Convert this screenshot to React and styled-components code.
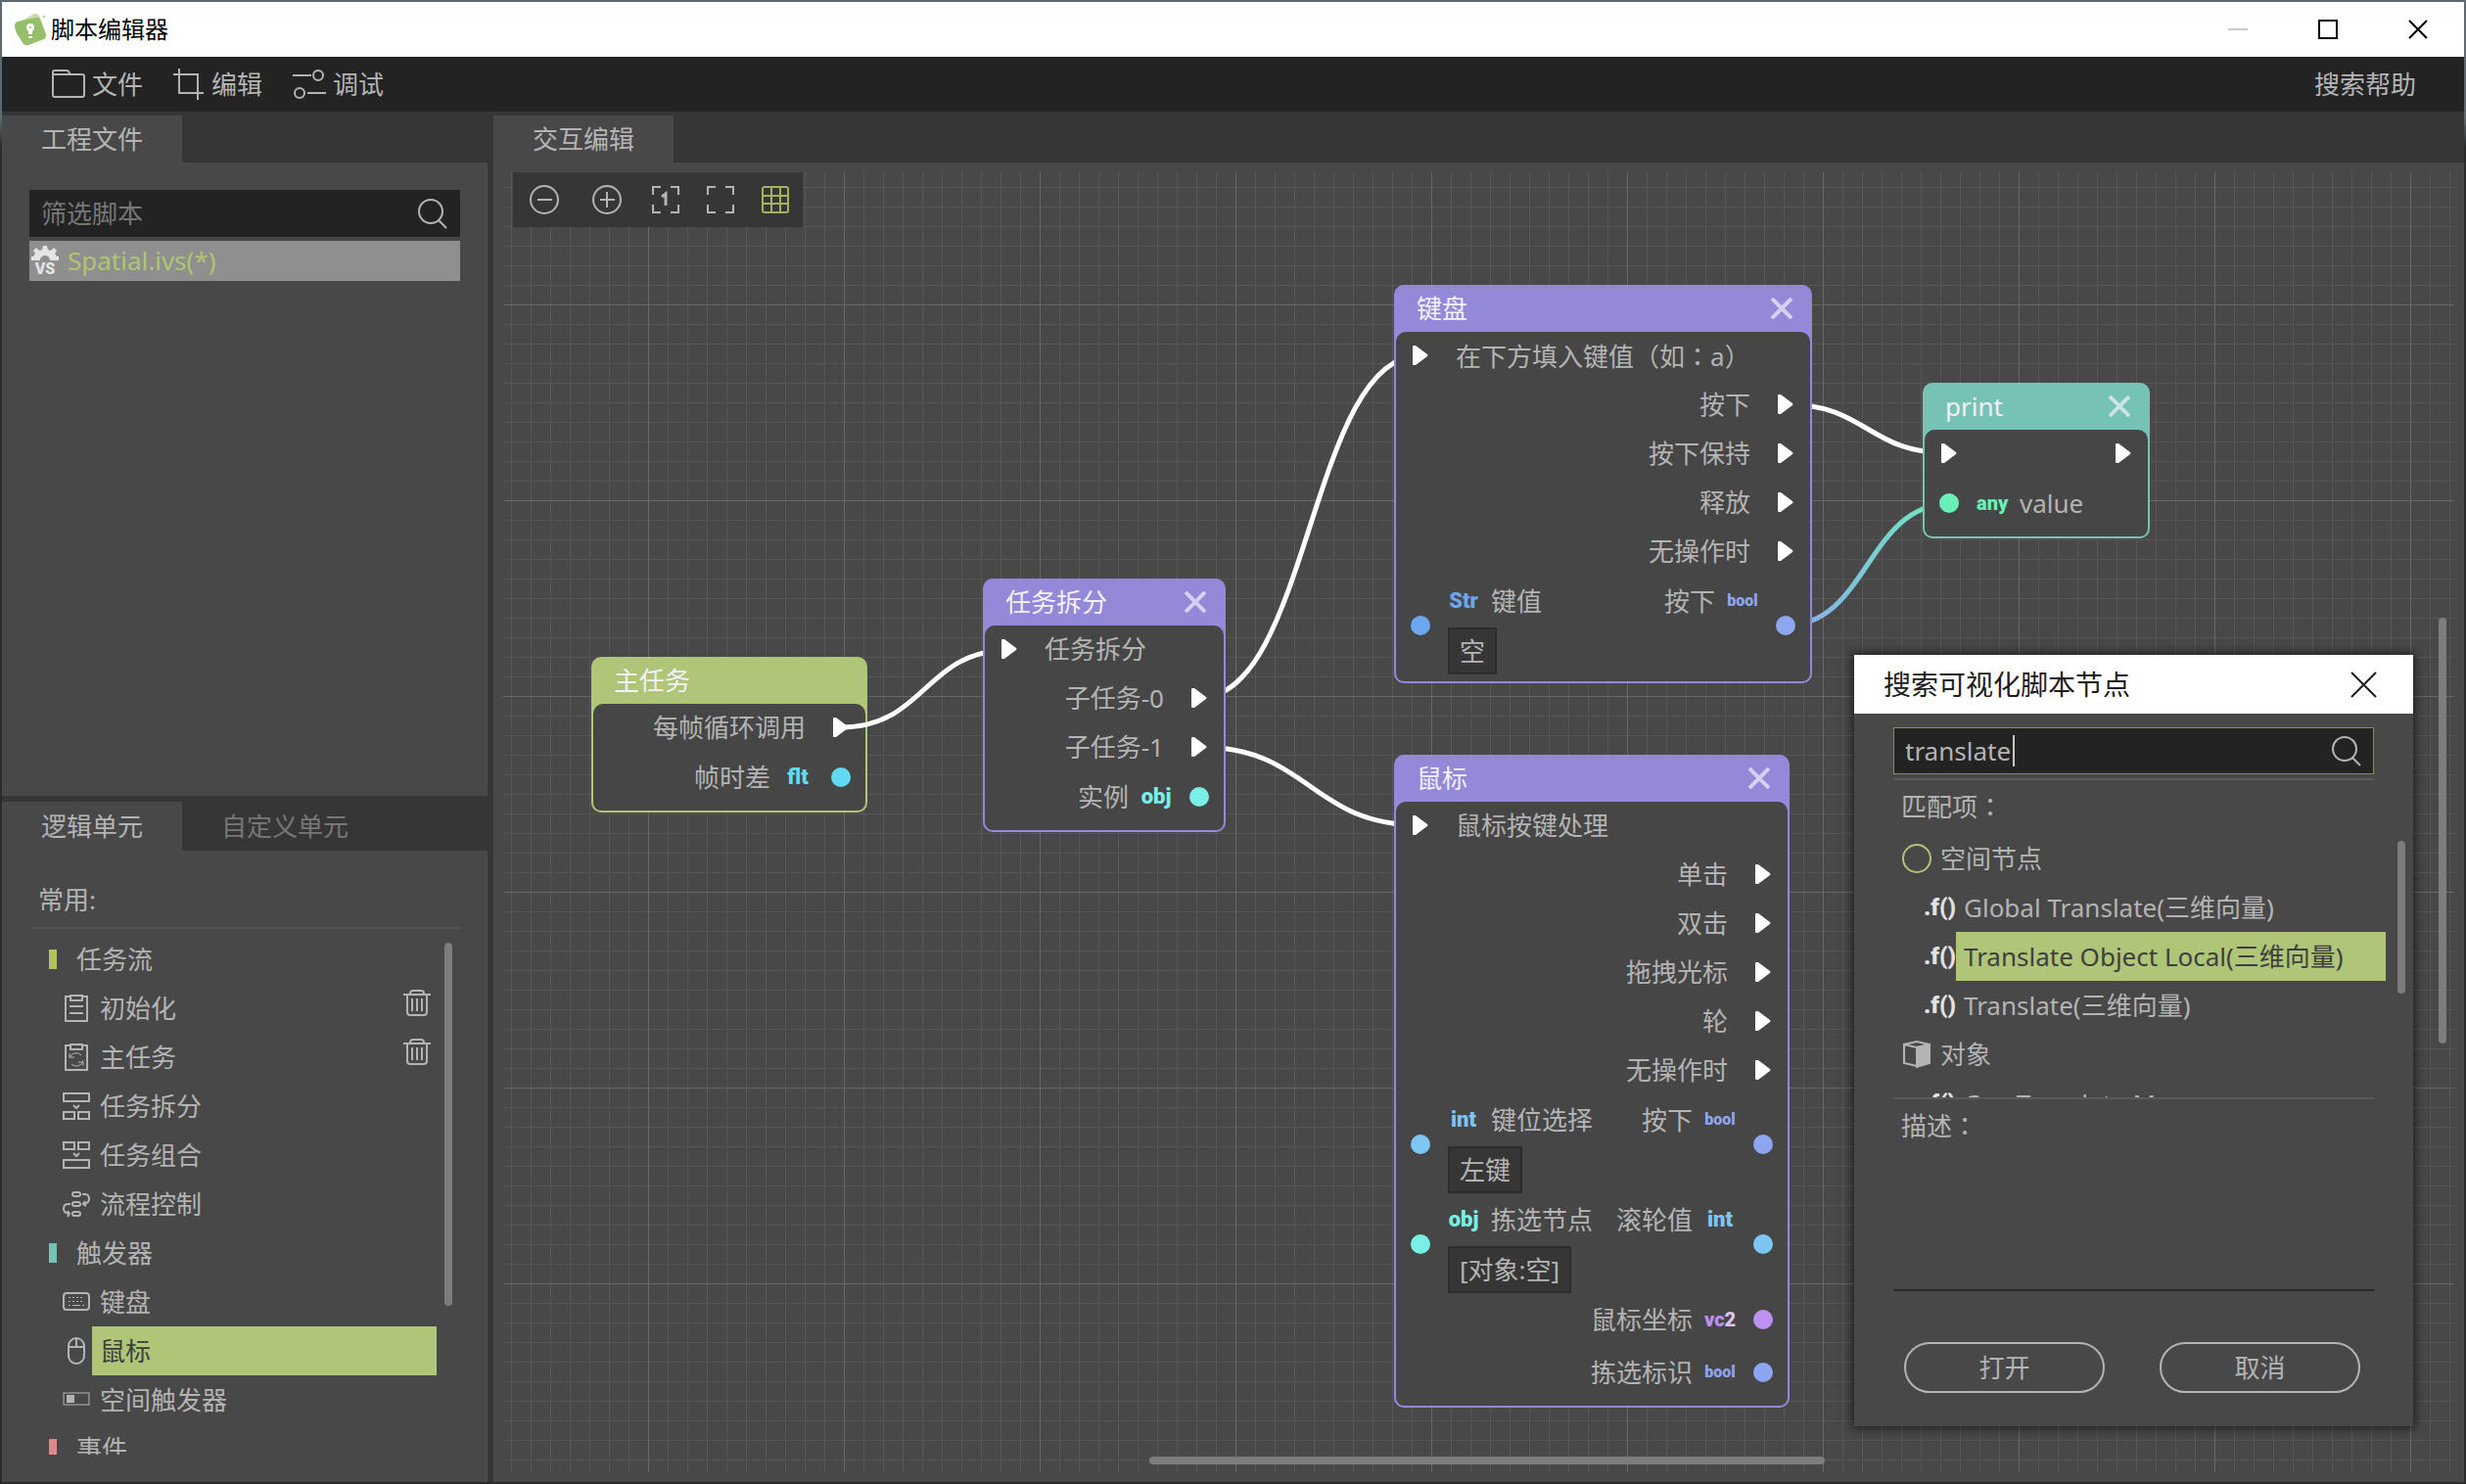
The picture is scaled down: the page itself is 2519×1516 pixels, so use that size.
import React from 'react';
import styled, { createGlobalStyle } from 'styled-components';

const COLORS = {
  text: '#b4b4b4',
  panel: '#484848',
  strip: '#363636',
  dark: '#232323',
  green: '#afc578',
  purple: '#9488d8',
  teal: '#76c2b5',
  flt: '#61daf5',
  obj: '#78f0e6',
  str: '#6ba6ee',
  bool: '#8ea5ef',
  any: '#69efb9',
  int: '#7dc6f2',
  vc2: '#bd91f1',
};

const GlobalStyle = createGlobalStyle`
  * {
    box-sizing: border-box;
  }

  body {
    margin: 0;
    overflow: hidden;
    background: #2d2d2d;
    color: ${COLORS.text};
    font-family: 'Noto Sans', 'Noto Sans CJK SC', sans-serif;
    font-size: 26px;
    line-height: 40px;
  }

  button,
  input {
    margin: 0;
    padding: 0;
    border: 0;
    background: none;
    color: inherit;
    font: inherit;
  }

  svg {
    display: block;
    flex: none;
  }
`;

const Window = styled.div`
  display: flex;
  flex-direction: column;
  height: 100vh;
  padding: 2px;
  background: linear-gradient(#5d6972 0, #5d6972 120px, #2b2b2b 150px);
`;

const TitleBar = styled.header`
  display: flex;
  align-items: center;
  flex: none;
  height: 56px;
  padding: 0 37px 0 12px;
  background: #fff;
  color: #000;
`;

const AppTitle = styled.h1`
  flex: 1;
  margin: 0 0 0 2px;
  font-size: 24px;
  font-weight: 400;
`;

const WindowButtons = styled.div`
  display: flex;
  gap: 72px;
`;

const IconButton = styled.button`
  display: flex;
  align-items: center;
  justify-content: center;
`;

const MenuBar = styled.nav`
  display: flex;
  align-items: center;
  flex: none;
  gap: 30px;
  height: 56px;
  padding: 0 49px 0 50px;
  background: ${COLORS.dark};
`;

const MenuButton = styled.button`
  display: flex;
  align-items: center;
  gap: 6px;
`;

const HelpButton = styled.button`
  margin-left: auto;
`;

const Workspace = styled.main`
  display: flex;
  flex: 1;
  gap: 6px;
  min-height: 0;
  background: ${COLORS.strip};
`;

const Sidebar = styled.aside`
  display: flex;
  flex-direction: column;
  flex: none;
  width: 496px;
`;

const Panel = styled.section`
  display: flex;
  flex-direction: column;
  flex: ${(p) => (p.$grow ? '1 1 0' : 'none')};
  min-width: 0;
  min-height: 0;
`;

const TabStrip = styled.div`
  display: flex;
  align-items: flex-end;
  flex: none;
  height: ${(p) => (p.$tall ? 56 : 52)}px;
  background: ${COLORS.strip};
`;

const Tab = styled.button`
  height: ${(p) => (p.$tall ? 50 : 48)}px;
  padding: 0 40px;
  background: ${(p) => (p.$active ? COLORS.panel : COLORS.strip)};
  color: ${(p) => (p.$active ? COLORS.text : '#777')};
`;

const FilesBody = styled.div`
  flex: 1;
  padding: 28px;
  background: ${COLORS.panel};
`;

const SearchBox = styled.label`
  display: flex;
  align-items: center;
  height: 48px;
  padding: 0 ${(p) => (p.$focused ? 11 : 12)}px;
  border: ${(p) => (p.$focused ? '1px solid #7f9057' : '0')};
  background: ${COLORS.dark};
`;

const SearchInput = styled.input`
  flex: 1;
  min-width: 0;
  outline: 0;

  &::placeholder {
    color: #777;
    opacity: 1;
  }
`;

const FileRow = styled.button`
  display: flex;
  align-items: center;
  gap: 8px;
  width: 100%;
  height: 41px;
  margin-top: 4px;
  padding: 0 0 2px 1px;
  background: #8f8f8f;
  color: #afc56f;
`;

const UnitsBody = styled.div`
  position: relative;
  height: 645px;
  padding: 30px 27px 0;
  background: ${COLORS.panel};
`;

const UnitsTitle = styled.h2`
  margin: 0;
  padding: 0 10px 8px;
  border-bottom: 2px solid #515151;
  font-size: 26px;
  font-weight: 400;
`;

const UnitList = styled.div`
  display: flex;
  flex-direction: column;
  height: 537px;
  padding: 6px 25px 0 21px;
  overflow: hidden;
`;

const UnitGroup = styled.div`
  display: flex;
  align-items: center;
  flex: none;
  gap: 20px;
  height: 50px;

  &::before {
    content: '';
    width: 8px;
    height: 20px;
    background: ${(p) => p.$color};
  }
`;

const UnitRow = styled.div`
  display: flex;
  align-items: center;
  flex: none;
  height: 50px;
  padding-left: 12px;
`;

const UnitIcon = styled.span`
  display: flex;
  justify-content: center;
  width: 32px;
`;

const UnitButton = styled.button`
  flex: 1;
  height: 50px;
  padding: 0 8px;
  background: ${(p) => (p.$selected ? COLORS.green : 'transparent')};
  color: ${(p) => (p.$selected ? '#3f3f3f' : COLORS.text)};
  text-align: left;
`;

const TrashButton = styled(IconButton)`
  height: 40px;
  margin: 0 6px 10px 0;
`;

const Scrollbar = styled.div`
  position: absolute;
  border-radius: 4px;
  background: #7d7d7d;
`;

const UnitScrollbar = styled(Scrollbar)`
  top: 94px;
  right: 36px;
  width: 8px;
  height: 371px;
`;

const EditorBody = styled.div`
  flex: 1;
  min-height: 0;
  padding: 10px;
  background: ${COLORS.panel};
`;

const Canvas = styled.div`
  position: relative;
  height: 100%;
  background-image:
    linear-gradient(90deg, #676767 1px, transparent 1px),
    linear-gradient(#676767 1px, transparent 1px),
    linear-gradient(90deg, #565656 1px, transparent 1px),
    linear-gradient(#565656 1px, transparent 1px);
  background-position: 148px 0, 0 135px, 8px 0, 0 15px;
  background-size: 200px 200px, 200px 200px, 20px 20px, 20px 20px;
`;

const Toolbar = styled.div`
  position: absolute;
  top: 0;
  left: 10px;
  display: flex;
  align-items: center;
  gap: 28px;
  height: 56px;
  padding: 0 14px 0 17px;
  background: ${COLORS.strip};
`;

const ZoomGroup = styled.div`
  display: flex;
  gap: 34px;
  padding-right: 3px;
`;

const Wires = styled.svg`
  position: absolute;
  top: 0;
  left: 0;
  width: 100%;
  height: 100%;
  fill: none;
  stroke: #fff;
  stroke-width: 5;
`;

const NodeCard = styled.article`
  position: absolute;
  padding-bottom: ${(p) => (p.$fields ? 7 : 9)}px;
  border: 2px solid ${(p) => p.$color};
  border-radius: 10px;
  background: linear-gradient(${(p) => p.$color} 60px, #464646 60px);
`;

const NodeHeader = styled.header`
  display: flex;
  align-items: center;
  justify-content: space-between;
  height: 46px;
  padding: 0 18px 2px 21px;
  color: #f2f1fa;
`;

const CloseNodeButton = styled(IconButton)`
  opacity: 0.7;
`;

const NodeBody = styled.div`
  border-radius: 10px 10px 0 0;
  background: #464646;
`;

const NodeRow = styled.div`
  display: flex;
  align-items: center;
  justify-content: space-between;
  height: ${(p) => (p.$roomy ? 54 : 50)}px;
  padding: 0 15px;
`;

const FieldRow = styled(NodeRow)`
  height: 100px;

  & + & {
    margin-top: 2px;
  }
`;

const PortGroup = styled.div`
  display: flex;
  align-items: center;
  margin-left: ${(p) => (p.$out ? 'auto' : '0')};
  padding-bottom: ${(p) => (p.$exec ? 2 : 0)}px;
`;

const PortLabel = styled.span`
  margin: 0 ${(p) => (p.$out ? p.$gap : 0)}px 0 ${(p) => (p.$out ? 0 : p.$gap)}px;
`;

const FieldColumn = styled.div`
  display: flex;
  flex-direction: column;
  align-items: flex-start;
  gap: 2px;
  height: 100px;
  margin: 0 ${(p) => (p.$out ? 18 : 0)}px 0 ${(p) => (p.$out ? 0 : 18)}px;
`;

const TypedLabel = styled.span`
  display: flex;
  align-items: center;
  gap: 12px;
  height: 50px;
`;

const TypeTag = styled.span`
  width: 32px;
  color: ${(p) => p.$color};
  font-family: Roboto, sans-serif;
  font-size: ${(p) => p.$size}px;
  font-weight: 900;
  line-height: 20px;
  text-align: center;
`;

const TagDigit = styled.span`
  color: #dac4f8;
`;

const FieldButton = styled.button`
  height: 48px;
  padding: 0 10px;
  border: 2px solid #2c2c2c;
  background: #363636;
`;

const Dot = styled.span`
  width: 20px;
  height: 20px;
  border-radius: 50%;
  background: ${(p) => p.$color};
`;

const ExecSlot = styled.span`
  display: flex;
  justify-content: center;
  width: 20px;
`;

// centred full-width punctuation
const Punct = styled.span`
  font-family: 'Noto Sans CJK TC', sans-serif;
  text-spacing-trim: space-all;
`;

const VerticalScrollbar = styled(Scrollbar)`
  top: 455px;
  right: 8px;
  width: 8px;
  height: 435px;
`;

const HorizontalScrollbar = styled(Scrollbar)`
  bottom: 8px;
  left: 660px;
  width: 690px;
  height: 8px;
`;

const Dialog = styled.div`
  position: absolute;
  top: 493px;
  right: 42px;
  width: 571px;
  background: ${COLORS.panel};
  box-shadow: 0 0 10px 2px rgba(0, 0, 0, 0.6);
`;

const DialogHeader = styled.header`
  display: flex;
  align-items: center;
  justify-content: space-between;
  height: 60px;
  padding: 0 37px 0 30px;
  background: #fff;
  color: #1c1c1c;
  font-size: 28px;
`;

const DialogBody = styled.div`
  position: relative;
  padding: 14px 40px 34px;
`;

const Caret = styled.span`
  flex: 1;
  height: 32px;
  border-left: 2px solid #c8c8c8;
`;

const QueryInput = styled(SearchInput)`
  flex: none;
  width: 110px;
  field-sizing: content;
`;

const SectionLabel = styled.h3`
  margin: 0;
  padding: 6px 8px 0;
  font-size: 26px;
  font-weight: 400;
`;

const MatchArea = styled.div`
  height: 328px;
  margin-top: 4px;
  border: solid #5a5a5a;
  border-width: 2px 0;
`;

const MatchList = styled.div`
  height: 269px;
  margin: 8px -12px 0 9px;
  overflow: hidden;
`;

const MatchGroup = styled.div`
  display: flex;
  align-items: center;
  gap: 9px;
  height: 50px;
`;

const MatchRow = styled.div`
  display: flex;
  align-items: center;
  height: 50px;
  padding-left: 22px;
`;

const FnTag = styled.span`
  width: 33px;
  color: #e2e2e2;
  font-family: Roboto, sans-serif;
  font-size: 24px;
  font-weight: 900;
  text-align: right;
`;

const MatchButton = styled.button`
  flex: 1;
  height: 50px;
  padding: 0 8px;
  background: ${(p) => (p.$selected ? COLORS.green : 'transparent')};
  color: ${(p) => (p.$selected ? '#3f3f3f' : COLORS.text)};
  text-align: left;
  white-space: nowrap;
`;

const MatchScrollbar = styled(Scrollbar)`
  top: 130px;
  right: 8px;
  width: 8px;
  height: 156px;
`;

const Description = styled.div`
  height: 196px;
  border-bottom: 2px solid #2a2a2a;
`;

const DialogActions = styled.div`
  display: flex;
  justify-content: space-between;
  padding: 52px 14px 0 11px;
`;

const PillButton = styled.button`
  width: 205px;
  height: 52px;
  border: 2px solid ${COLORS.text};
  border-radius: 26px;
`;

/* Icons */

const Icon = ({ w, h = w, sw = 2, color = 'currentColor', children }) => (
  <svg width={w} height={h} viewBox={`0 0 ${w} ${h}`} fill="none" stroke={color} strokeWidth={sw} aria-hidden="true">
    {children}
  </svg>
);

const LogoIcon = () => (
  <Icon w={36} sw={0}>
    <path d="M3 12 L21 2 Q24 1 26 4 L33 22 Q33 25 31 27 L14 33 Z" fill="#c9dcab" />
    <path d="M1 14 Q1 11 4 10 L23 6 Q26 5 27 8 L33 24 Q33 27 31 28 L15 34 Q12 35 10 33 L3 22 Q1 18 1 14 Z" fill="#96bf6c" />
    <circle cx="31" cy="5" r="1" fill="#9bc46f" />
    <circle cx="17" cy="16" r="4" fill="#fff" />
    <path d="M15 19 h4 v4 h-4 Z M15 25 h4 v2 h-4 Z" fill="#fff" />
    <circle cx="17" cy="16" r="1" fill="#96bf6c" />
  </Icon>
);

const CrossIcon = ({ size, sw }) => (
  <Icon w={size} sw={sw}>
    <path d={`M1 1 L${size - 1} ${size - 1} M${size - 1} 1 L1 ${size - 1}`} />
  </Icon>
);

const SearchIcon = () => (
  <Icon w={32}>
    <circle cx="14" cy="14" r="12" />
    <path d="M22 23 L30 31" />
  </Icon>
);

const FolderIcon = () => (
  <Icon w={36} h={32}>
    <path d="M2 7 V27 Q2 29 4 29 H32 Q34 29 34 27 V8 Q34 6 32 6 H20 L18 3 Q17 2 16 2 H4 Q2 2 2 4 Z M2 6 H20" />
  </Icon>
);

const CropIcon = () => (
  <Icon w={34}>
    <path d="M7 1 V26 H32 M1 7 H26 V33" />
  </Icon>
);

const SlidersIcon = () => (
  <Icon w={36} h={32}>
    <path d="M1 7 H20 M16 25 H35" />
    <circle cx="27" cy="7" r="5" />
    <circle cx="8" cy="25" r="5" />
  </Icon>
);

const FileIcon = () => (
  <svg width="30" height="34" viewBox="0 0 30 34" fill="#e4e4e4" aria-hidden="true">
    <path d="M13 2 h4 l1 4 3 1 3-3 3 3 -2 3 2 3 h2 v4 h-9 a5 5 0 1 0 -10 0 h-9 v-4 h2 l2-3 -2-3 3-3 3 3 3-1 Z" />
    <text x="15" y="31" textAnchor="middle" fontFamily="Roboto, sans-serif" fontWeight="900" fontSize="16">
      VS
    </text>
  </svg>
);

const TrashIcon = () => (
  <Icon w={28}>
    <path d="M0 5 H28 M7 4 Q7 1 10 1 H18 Q21 1 21 4 M4 5 V23 Q4 26 7 26 H21 Q24 26 24 23 V5 M9 9 V22 M14 9 V22 M19 9 V22" />
  </Icon>
);

const ClipboardIcon = ({ cycle }) => (
  <Icon w={28} h={30}>
    <path d="M8 3 H3 V28 H25 V3 H20 M8 2 H20 V7 H8 Z" />
    {cycle ? (
      <path d="M7 16 A7 7 0 0 1 19 13 M21 18 A7 7 0 0 1 9 22 M7 11 V15 H12 M21 24 V20 H16" strokeWidth="1" />
    ) : (
      <path d="M7 13 H21 M7 20 H21" />
    )}
  </Icon>
);

const SplitIcon = () => (
  <Icon w={28} h={30}>
    <path d="M1 2 H27 V10 H1 Z M1 21 H12 V28 H1 Z M16 21 H27 V28 H16 Z M11 14 L14 17 L17 14" />
  </Icon>
);

const MergeIcon = () => (
  <Icon w={28} h={30}>
    <path d="M1 2 H12 V9 H1 Z M16 2 H27 V9 H16 Z M1 20 H27 V28 H1 Z M11 13 L14 16 L17 13" />
  </Icon>
);

const FlowIcon = () => (
  <Icon w={30}>
    <rect x="11" y="3" width="8" height="4" rx="2" />
    <rect x="11" y="13" width="8" height="4" rx="2" />
    <rect x="11" y="23" width="8" height="4" rx="2" />
    <path d="M21 5 H24 Q28 5 28 10 Q28 14 22 15 M24 12 L22 15 L25 17 M9 15 H6 Q2 15 2 20 Q2 24 8 25 M6 22 L8 25 L6 28" />
  </Icon>
);

const KeyboardIcon = () => (
  <Icon w={28} h={20}>
    <rect x="1" y="1" width="26" height="17" rx="3" />
    <path d="M6 5.5 H22 M6 9.5 H22" strokeWidth="1" strokeDasharray="2 2" />
    <path d="M6 13.5 H8 M10 13.5 H18 M20 13.5 H22" strokeWidth="1" />
  </Icon>
);

const MouseIcon = () => (
  <Icon w={28} h={30}>
    <rect x="6" y="2" width="16" height="26" rx="8" />
    <path d="M6 11 H22 M14 2 V11" />
  </Icon>
);

const TriggerIcon = () => (
  <Icon w={28} h={18}>
    <rect x="1" y="2" width="26" height="12" strokeWidth="1" />
    <rect x="4" y="4" width="8" height="8" fill="currentColor" stroke="none" />
  </Icon>
);

const ZoomOutIcon = () => (
  <Icon w={30}>
    <circle cx="15" cy="15" r="14" />
    <path d="M8 15 H23" />
  </Icon>
);

const ZoomInIcon = () => (
  <Icon w={30}>
    <circle cx="15" cy="15" r="14" />
    <path d="M8 15 H23 M15 7 V23" />
  </Icon>
);

const CORNERS = 'M1 9 V1 H9 M19 1 H27 V9 M27 19 V27 H19 M9 27 H1 V19';

const ActualSizeIcon = () => (
  <Icon w={28}>
    <path d={CORNERS} />
    <path d="M10 11 L14 8 V20" strokeWidth="3" />
  </Icon>
);

const FitIcon = () => (
  <Icon w={28}>
    <path d={CORNERS} />
  </Icon>
);

const GridIcon = () => (
  <Icon w={28} color="#9fb361">
    <rect x="1" y="1" width="26" height="26" rx="2" />
    <path d="M10 1 V27 M19 1 V27 M1 10 H27 M1 18 H27" />
  </Icon>
);

const CubeIcon = () => (
  <Icon w={30}>
    <path d="M2 5 L15 8 V27 L2 24 Z M2 5 L15 2 L28 5 L15 8" />
    <path d="M15 8 L28 5 V24 L15 28 Z" fill="currentColor" />
  </Icon>
);

const ExecArrow = () => (
  <ExecSlot>
    <svg width="16" height="20" viewBox="0 0 16 20" fill="#fff" aria-hidden="true">
      <path d="M0 1 Q0 0 1 0 H3 L15 9 Q16 10 15 11 L3 20 H1 Q0 20 0 19 Z" />
    </svg>
  </ExecSlot>
);

/* Node graph */

const TAG_SIZES = { bool: 16, any: 20, vc2: 20 };

const TAG_TEXT = {
  str: 'Str',
  vc2: (
    <>
      vc<TagDigit>2</TagDigit>
    </>
  ),
};

const Tag = ({ type }) => (
  <TypeTag $color={COLORS[type]} $size={TAG_SIZES[type] || 22}>
    {TAG_TEXT[type] || type}
  </TypeTag>
);

const Port = ({ type, label, out }) => {
  const marker = type ? <Dot $color={COLORS[type]} /> : <ExecArrow />;
  const content = type ? (
    <PortLabel $out={out} $gap={18}>
      <TypedLabel>
        {out && label}
        <Tag type={type} />
        {!out && label}
      </TypedLabel>
    </PortLabel>
  ) : (
    <PortLabel $out={out} $gap={26}>
      {label}
    </PortLabel>
  );

  return (
    <PortGroup $out={out} $exec={!type}>
      {!out && marker}
      {content}
      {out && marker}
    </PortGroup>
  );
};

const FieldPort = ({ type, label, value, out }) => (
  <PortGroup $out={out}>
    {!out && <Dot $color={COLORS[type]} />}
    <FieldColumn $out={out}>
      <TypedLabel>
        {out && label}
        <Tag type={type} />
        {!out && label}
      </TypedLabel>
      {value && <FieldButton aria-label={label}>{value}</FieldButton>}
    </FieldColumn>
    {out && <Dot $color={COLORS[type]} />}
  </PortGroup>
);

const GraphNode = ({ title, color, x, y, width, closable = true, fields = false, children }) => (
  <NodeCard $color={color} $fields={fields} style={{ left: x, top: y, width }}>
    <NodeHeader>
      {title}
      {closable && (
        <CloseNodeButton aria-label="关闭">
          <CrossIcon size={22} sw={4} />
        </CloseNodeButton>
      )}
    </NodeHeader>
    <NodeBody>{children}</NodeBody>
  </NodeCard>
);

// wires leave and enter their ports horizontally
const wirePath = (x1, y1, x2, y2) => {
  const mid = (x1 + x2) / 2;
  return `M${x1} ${y1} C${mid} ${y1} ${mid} ${y2} ${x2} ${y2}`;
};

const Graph = () => (
  <>
    <GraphNode title="主任务" color={COLORS.green} x={90} y={495} width={282} closable={false}>
      <NodeRow>
        <Port out label="每帧循环调用" />
      </NodeRow>
      <NodeRow>
        <Port out type="flt" label="帧时差" />
      </NodeRow>
    </GraphNode>

    <Wires>
      <defs>
        <linearGradient id="boolToAny">
          <stop offset="0" stopColor={COLORS.bool} />
          <stop offset="1" stopColor={COLORS.any} />
        </linearGradient>
      </defs>
      <path d={wirePath(345, 567, 517, 488)} />
      <path d={wirePath(711, 537, 937, 187)} />
      <path d={wirePath(711, 587, 937, 667)} />
      <path d={wirePath(1310, 237, 1477, 287)} />
      <path d={wirePath(1310, 463, 1477, 339)} stroke="url(#boolToAny)" />
    </Wires>

    <GraphNode title="任务拆分" color={COLORS.purple} x={490} y={415} width={248}>
      <NodeRow>
        <Port label="任务拆分" />
      </NodeRow>
      <NodeRow>
        <Port out label="子任务-0" />
      </NodeRow>
      <NodeRow>
        <Port out label="子任务-1" />
      </NodeRow>
      <NodeRow>
        <Port out type="obj" label="实例" />
      </NodeRow>
    </GraphNode>

    <GraphNode title="键盘" color={COLORS.purple} x={910} y={115} width={427} fields>
      <NodeRow>
        <Port
          label={
            <>
              在下方填入键值<Punct>（</Punct>如<Punct>：</Punct>a<Punct>）</Punct>
            </>
          }
        />
      </NodeRow>
      {['按下', '按下保持', '释放', '无操作时'].map((label) => (
        <NodeRow key={label}>
          <Port out label={label} />
        </NodeRow>
      ))}
      <FieldRow>
        <FieldPort type="str" label="键值" value="空" />
        <FieldPort out type="bool" label="按下" />
      </FieldRow>
    </GraphNode>

    <GraphNode title="鼠标" color={COLORS.purple} x={910} y={595} width={404} fields>
      <NodeRow>
        <Port label="鼠标按键处理" />
      </NodeRow>
      {['单击', '双击', '拖拽光标', '轮', '无操作时'].map((label) => (
        <NodeRow key={label}>
          <Port out label={label} />
        </NodeRow>
      ))}
      <FieldRow>
        <FieldPort type="int" label="键位选择" value="左键" />
        <FieldPort out type="bool" label="按下" />
      </FieldRow>
      <FieldRow>
        <FieldPort type="obj" label="拣选节点" value="[对象:空]" />
        <FieldPort out type="int" label="滚轮值" />
      </FieldRow>
      <NodeRow $roomy>
        <Port out type="vc2" label="鼠标坐标" />
      </NodeRow>
      <NodeRow $roomy>
        <Port out type="bool" label="拣选标识" />
      </NodeRow>
    </GraphNode>

    <GraphNode title="print" color={COLORS.teal} x={1450} y={215} width={232}>
      <NodeRow>
        <Port />
        <Port out />
      </NodeRow>
      <NodeRow>
        <Port type="any" label="value" />
      </NodeRow>
    </GraphNode>
  </>
);

/* Side panels and dialog */

const UNIT_GROUPS = [
  {
    name: '任务流',
    color: '#afc163',
    items: [
      { name: '初始化', icon: <ClipboardIcon />, removable: true },
      { name: '主任务', icon: <ClipboardIcon cycle />, removable: true },
      { name: '任务拆分', icon: <SplitIcon /> },
      { name: '任务组合', icon: <MergeIcon /> },
      { name: '流程控制', icon: <FlowIcon /> },
    ],
  },
  {
    name: '触发器',
    color: COLORS.teal,
    items: [
      { name: '键盘', icon: <KeyboardIcon /> },
      { name: '鼠标', icon: <MouseIcon />, selected: true },
      { name: '空间触发器', icon: <TriggerIcon /> },
    ],
  },
  { name: '事件', color: '#db8888', items: [] },
];

const Units = () => (
  <UnitList>
    {UNIT_GROUPS.map((group) => (
      <React.Fragment key={group.name}>
        <UnitGroup $color={group.color}>{group.name}</UnitGroup>
        {group.items.map((item) => (
          <UnitRow key={item.name}>
            <UnitIcon>{item.icon}</UnitIcon>
            <UnitButton $selected={item.selected}>{item.name}</UnitButton>
            {item.removable && (
              <TrashButton aria-label="删除">
                <TrashIcon />
              </TrashButton>
            )}
          </UnitRow>
        ))}
      </React.Fragment>
    ))}
  </UnitList>
);

const Match = ({ name, selected }) => (
  <MatchRow>
    <FnTag>.f()</FnTag>
    <MatchButton $selected={selected}>{name}</MatchButton>
  </MatchRow>
);

const SearchDialog = () => (
  <Dialog role="dialog" aria-label="搜索可视化脚本节点">
    <DialogHeader>
      搜索可视化脚本节点
      <IconButton aria-label="关闭">
        <CrossIcon size={27} sw={2} />
      </IconButton>
    </DialogHeader>
    <DialogBody>
      <SearchBox $focused>
        <QueryInput type="text" aria-label="搜索" defaultValue="translate" />
        <Caret />
        <SearchIcon />
      </SearchBox>
      <MatchArea>
        <SectionLabel>
          匹配项<Punct>：</Punct>
        </SectionLabel>
        <MatchList>
          <MatchGroup>
            <Icon w={30} color={COLORS.green}>
              <circle cx="15" cy="15" r="14" />
            </Icon>
            空间节点
          </MatchGroup>
          <Match name="Global Translate(三维向量)" />
          <Match name="Translate Object Local(三维向量)" selected />
          <Match name="Translate(三维向量)" />
          <MatchGroup>
            <CubeIcon />
            对象
          </MatchGroup>
          <Match name="Can Translate Messages" />
        </MatchList>
      </MatchArea>
      <Description>
        <SectionLabel>
          描述<Punct>：</Punct>
        </SectionLabel>
      </Description>
      <DialogActions>
        <PillButton>打开</PillButton>
        <PillButton>取消</PillButton>
      </DialogActions>
      <MatchScrollbar />
    </DialogBody>
  </Dialog>
);

const App = () => {
  return (
    <>
      <GlobalStyle />
      <Window>
        <TitleBar>
          <LogoIcon />
          <AppTitle>脚本编辑器</AppTitle>
          <WindowButtons>
            <IconButton aria-label="最小化">
              <Icon w={20} color="#ccc">
                <path d="M0 10 H20" />
              </Icon>
            </IconButton>
            <IconButton aria-label="最大化">
              <Icon w={20}>
                <path d="M1 1 H19 V19 H1 Z" />
              </Icon>
            </IconButton>
            <IconButton aria-label="关闭窗口">
              <CrossIcon size={20} sw={2} />
            </IconButton>
          </WindowButtons>
        </TitleBar>

        <MenuBar>
          <MenuButton>
            <FolderIcon />
            文件
          </MenuButton>
          <MenuButton>
            <CropIcon />
            编辑
          </MenuButton>
          <MenuButton>
            <SlidersIcon />
            调试
          </MenuButton>
          <HelpButton>搜索帮助</HelpButton>
        </MenuBar>

        <Workspace>
          <Sidebar>
            <Panel $grow>
              <TabStrip>
                <Tab $active>工程文件</Tab>
              </TabStrip>
              <FilesBody>
                <SearchBox>
                  <SearchInput type="text" aria-label="筛选脚本" placeholder="筛选脚本" />
                  <SearchIcon />
                </SearchBox>
                <FileRow>
                  <FileIcon />
                  Spatial.ivs(*)
                </FileRow>
              </FilesBody>
            </Panel>
            <Panel>
              <TabStrip $tall>
                <Tab $active $tall>
                  逻辑单元
                </Tab>
                <Tab $tall>自定义单元</Tab>
              </TabStrip>
              <UnitsBody>
                <UnitsTitle>常用:</UnitsTitle>
                <Units />
                <UnitScrollbar />
              </UnitsBody>
            </Panel>
          </Sidebar>

          <Panel $grow>
            <TabStrip>
              <Tab $active>交互编辑</Tab>
            </TabStrip>
            <EditorBody>
              <Canvas>
                <Graph />
                <Toolbar>
                  <ZoomGroup>
                    <IconButton aria-label="缩小">
                      <ZoomOutIcon />
                    </IconButton>
                    <IconButton aria-label="放大">
                      <ZoomInIcon />
                    </IconButton>
                  </ZoomGroup>
                  <IconButton aria-label="原始大小">
                    <ActualSizeIcon />
                  </IconButton>
                  <IconButton aria-label="适应窗口">
                    <FitIcon />
                  </IconButton>
                  <IconButton aria-label="网格">
                    <GridIcon />
                  </IconButton>
                </Toolbar>
                <VerticalScrollbar />
                <HorizontalScrollbar />
                <SearchDialog />
              </Canvas>
            </EditorBody>
          </Panel>
        </Workspace>
      </Window>
    </>
  );
};

export default App;
